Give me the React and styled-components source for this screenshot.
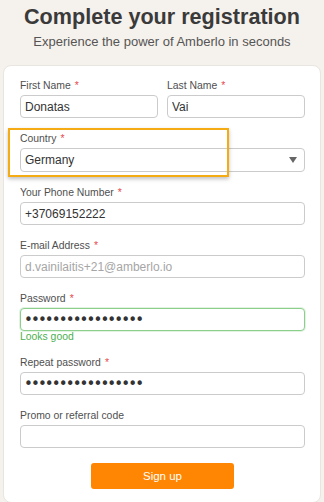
import React from "react";
import styled, { createGlobalStyle } from "styled-components";

const GlobalStyle = createGlobalStyle`
	html, body {
		margin: 0;
		padding: 0;
		background: #f5f1ec;
		font-family: "Liberation Sans", Arial, sans-serif;
	}
	* {
		box-sizing: border-box;
	}
`;

const Page = styled.div`
	display: flex;
	flex-direction: column;
	align-items: center;
	padding-top: 4px;
	height: 502px;
	overflow: hidden;
`;

const Title = styled.h1`
	margin: 0;
	font-size: 21.6px;
	line-height: 26px;
	font-weight: 700;
	color: #3a3a3a;
`;

const Subtitle = styled.p`
	margin: 4px 0 0;
	font-size: 13px;
	line-height: 15px;
	color: #555;
`;

const Card = styled.form`
	align-self: stretch;
	margin: 16px 3px 0;
	padding: 13px 15px 13px 16px;
	background: #fff;
	border: 1px solid #e9e5e0;
	border-radius: 8px;
	display: flex;
	flex-direction: column;
	gap: 14px;
`;

const Row = styled.div`
	display: grid;
	grid-template-columns: 1fr 1fr;
	gap: 9px;
`;

const Field = styled.div`
	position: relative;
	display: flex;
	flex-direction: column;
`;

const Label = styled.label`
	font-size: 10.4px;
	line-height: 13px;
	margin-bottom: 3px;
	color: #4f4f4f;
`;

const Req = styled.span`
	color: #e5484d;
	margin-left: 4px;
`;

const Input = styled.input`
	height: 23px;
	width: 100%;
	padding: 0 4px;
	border: 1px solid ${(p) => (p.$valid ? "#8ccf8c" : "#cbcbcb")};
	border-radius: 4px;
	background: #fff;
	font-family: "Liberation Sans", Arial, sans-serif;
	font-size: 12px;
	color: ${(p) => (p.$muted ? "#a6a6a6" : "#333")};
	outline: none;
	box-shadow: ${(p) => (p.$valid ? "0 0 0 1px rgba(140, 207, 140, 0.25)" : "none")};

	&[type="password"] {
		font-family: "DejaVu Sans", sans-serif;
		font-size: 15px;
		letter-spacing: -1.9px;
		padding-left: 3px;
		color: #333;
	}
`;

const SelectBox = styled.div`
	height: 24px;
	display: flex;
	align-items: center;
	justify-content: space-between;
	padding: 0 7px 0 4px;
	border: 1px solid #cbcbcb;
	border-radius: 4px;
	font-size: 12px;
	color: #333;
`;

const Highlight = styled.div`
	position: absolute;
	left: -12px;
	top: -4px;
	width: 221px;
	height: 49px;
	border: 2px solid #f5ab14;
	box-shadow: 0 2px 4px rgba(0, 0, 0, 0.25);
	pointer-events: none;
`;

const Hint = styled.div`
	font-size: 10.4px;
	line-height: 11px;
	color: #4caf50;
`;

const Button = styled.button`
	align-self: center;
	margin-top: 1px;
	width: 143px;
	height: 26px;
	border: none;
	border-radius: 3px;
	background: #ff8602;
	color: #fff;
	font-family: "Liberation Sans", Arial, sans-serif;
	font-size: 11.5px;
`;

const Arrow = () => (
	<svg width="8" height="6" viewBox="0 0 8 6">
		<path d="M0 0h8L4 6z" fill="#666" />
	</svg>
);

const App = () => {
	return (
		<Page>
			<GlobalStyle />
			<Title>Complete your registration</Title>
			<Subtitle>Experience the power of Amberlo in seconds</Subtitle>
			<Card onSubmit={(e) => e.preventDefault()}>
				<Row>
					<Field>
						<Label>
							First Name<Req>*</Req>
						</Label>
						<Input readOnly value="Donatas" />
					</Field>
					<Field>
						<Label>
							Last Name<Req>*</Req>
						</Label>
						<Input readOnly value="Vai" />
					</Field>
				</Row>
				<Field>
					<Label>
						Country<Req>*</Req>
					</Label>
					<SelectBox>
						<span>Germany</span>
						<Arrow />
					</SelectBox>
					<Highlight />
				</Field>
				<Field>
					<Label>
						Your Phone Number<Req>*</Req>
					</Label>
					<Input readOnly value="+37069152222" />
				</Field>
				<Field>
					<Label>
						E-mail Address<Req>*</Req>
					</Label>
					<Input readOnly $muted value="d.vainilaitis+21@amberlo.io" />
				</Field>
				<Field>
					<Label>
						Password<Req>*</Req>
					</Label>
					<Input readOnly type="password" $valid value="aaaaaaaaaaaaaaaaa" />
					<Hint>Looks good</Hint>
				</Field>
				<Field>
					<Label>
						Repeat password<Req>*</Req>
					</Label>
					<Input readOnly type="password" value="aaaaaaaaaaaaaaaaa" />
				</Field>
				<Field>
					<Label>Promo or referral code</Label>
					<Input readOnly value="" />
				</Field>
				<Button type="submit">Sign up</Button>
			</Card>
		</Page>
	);
};

export default App;
